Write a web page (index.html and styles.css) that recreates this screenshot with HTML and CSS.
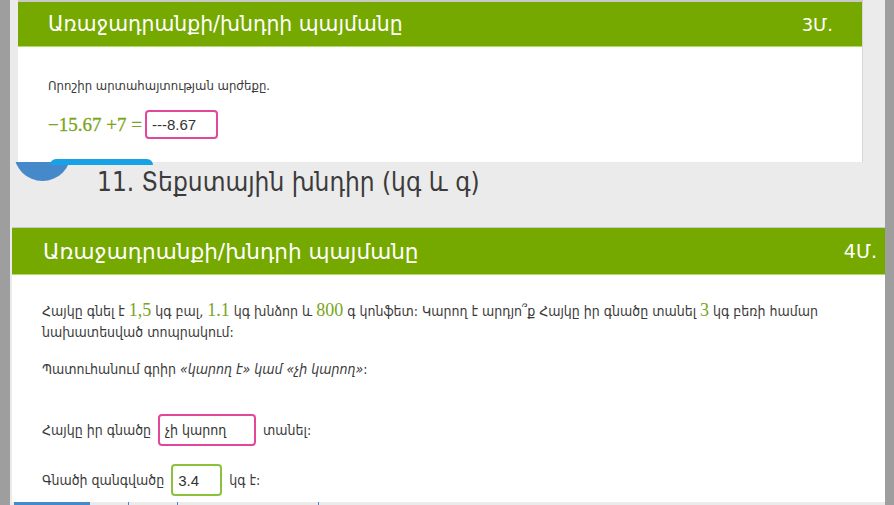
FILE: index.html
```html
<!DOCTYPE html>
<html lang="hy">
<head>
<meta charset="utf-8">
<link rel="stylesheet" href="styles.css">
</head>
<body>
<div class="side side-left"></div>
<main class="main">
  <section class="card card-one">
    <header class="card-head head-one">
      <span class="head-title">Առաջադրանքի/խնդրի պայմանը</span>
      <span class="head-points">3Մ.</span>
    </header>
    <div class="card-body body-one">
      <p class="task-text">Որոշիր արտահայտության արժեքը.</p>
      <div class="math-row">
        <span class="math">−15.67 +7 =</span>
        <span class="answer answer-pink answer-math">---8.67</span>
      </div>
    </div>
  </section>

  <div class="section-title">
    <span class="blue-tab"></span>
    <span class="circle-clip"><span class="blue-circle"></span></span>
    <h2 class="title-text">11. Տեքստային խնդիր (կգ և գ)</h2>
  </div>

  <section class="card card-two">
    <header class="card-head head-two">
      <span class="head-title">Առաջադրանքի/խնդրի պայմանը</span>
      <span class="head-points">4Մ.</span>
    </header>
    <div class="card-body body-two">
      <p class="task-text text-large"><span>Հայկը գնել է</span> <span class="num">1,5</span> <span>կգ բալ,</span> <span class="num">1.1</span> <span>կգ խնձոր և</span> <span class="num">800</span> <span>գ կոնֆետ: Կարող է արդյո՞ք Հայկը իր գնածը տանել</span> <span class="num">3</span> <span>կգ բեռի համար</span> <span>նախատեսված տոպրակում:</span></p>
      <p class="task-text text-large hint">Պատուհանում գրիր <em>«կարող է» կամ «չի կարող»</em>:</p>
      <div class="answer-row row-first">
        <span>Հայկը իր գնածը</span>
        <span class="answer answer-pink answer-wide">չի կարող</span>
        <span>տանել:</span>
      </div>
      <div class="answer-row row-second">
        <span>Գնածի զանգվածը</span>
        <span class="answer answer-green answer-short">3.4</span>
        <span>կգ է:</span>
      </div>
    </div>
  </section>
  <div class="bottom-strip">
    <span class="strip-block"></span>
    <span class="strip-line line-a"></span>
    <span class="strip-line line-b"></span>
    <span class="strip-line line-c"></span>
  </div>
</main>
<div class="side side-right"></div>
</body>
</html>
```

FILE: styles.css
```css
html, body {
  margin: 0;
  padding: 0;
}
body {
  width: 894px;
  height: 505px;
  overflow: hidden;
  display: flex;
  background: #ebebeb;
  font-family: "DejaVu Sans", "Noto Sans", sans-serif;
  color: #3a3a3a;
}
.side {
  flex: none;
  background: #9e9e9e;
}
.side-left { width: 10px; }
.side-right { width: 9px; }
.main {
  flex: none;
  width: 875px;
  display: flex;
  flex-direction: column;
  position: relative;
}
.card {
  background: #fff;
  position: relative;
  z-index: 2;
}
.card-one {
  margin-left: 8px;
  width: 844px;
  border-top: 2px solid #c9c9c9;
  border-right: 1px solid #d6d6d6;
}
.card-head {
  display: flex;
  align-items: center;
  justify-content: space-between;
  background: #75a900;
  color: #fff;
  border-bottom: 1px solid #b5d86a;
}
.head-one {
  height: 44px;
  padding: 0 29px 0 30px;
  font-size: 20.4px;
}
.head-two {
  height: 46px;
  padding: 0 8px 0 31px;
  font-size: 21.6px;
  border-top: 1px solid #c9c9c9;
}
.head-points {
  font-size: 0.88em;
}
.body-one {
  height: 115px;
  padding: 28px 30px 0 30px;
  box-sizing: border-box;
}
.task-text {
  margin: 0;
  font-family: "DejaVu Sans Condensed", "DejaVu Sans", sans-serif;
  font-stretch: condensed;
  font-size: 13px;
  line-height: 21px;
}
.text-large {
  font-size: 14px;
}
.math-row {
  display: flex;
  align-items: center;
  margin-top: 14px;
  gap: 3px;
}
.math {
  font-family: "Liberation Serif", "DejaVu Serif", serif;
  font-size: 19px;
  color: #78a520;
  -webkit-text-stroke: 0.3px #78a520;
}
.answer {
  display: inline-flex;
  align-items: center;
  box-sizing: border-box;
  border-radius: 4px;
  padding: 0 5px;
  font-family: "DejaVu Sans Condensed", "DejaVu Sans", sans-serif;
  font-stretch: condensed;
  font-size: 14px;
  color: #333;
  background: #fff;
}
.answer-pink { border: 2px solid #e3479c; }
.answer-green { border: 2px solid #8cc23b; }
.answer-math {
  width: 73px;
  height: 29px;
  font-family: "Liberation Sans", sans-serif;
  font-size: 15px;
}
.section-title {
  height: 65px;
  display: flex;
  align-items: flex-start;
  position: relative;
}
.blue-tab {
  position: absolute;
  left: 40px;
  top: -3px;
  width: 103px;
  height: 6px;
  background: #17a2e6;
  border-radius: 6px 6px 0 0;
  z-index: 3;
}
.circle-clip {
  position: absolute;
  left: 0;
  top: 0;
  width: 80px;
  height: 30px;
  overflow: hidden;
  z-index: 1;
}
.blue-circle {
  position: absolute;
  left: 4px;
  top: -38px;
  width: 57px;
  height: 57px;
  border-radius: 50%;
  background: #4589cb;
}
.title-text {
  margin: 2px 0 0 87px;
  font-family: "DejaVu Sans Condensed", "DejaVu Sans", sans-serif;
  font-stretch: condensed;
  font-weight: normal;
  font-size: 26px;
  line-height: 36px;
  color: #3b3b3b;
  position: relative;
  z-index: 3;
}
.card-two {
  margin-left: 2px;
  width: 873px;
}
.body-two {
  height: 227px;
  padding: 26px 30px 0 30px;
  box-sizing: border-box;
}
.hint {
  margin-top: 16px;
}
.hint em {
  font-style: italic;
}
.num {
  font-family: "Liberation Serif", "DejaVu Serif", serif;
  font-size: 18px;
  line-height: 1;
  color: #78a520;
}
.answer-row {
  display: flex;
  align-items: center;
  gap: 7px;
  font-family: "DejaVu Sans Condensed", "DejaVu Sans", sans-serif;
  font-stretch: condensed;
  font-size: 14px;
}
.row-first { margin-top: 34px; }
.row-second { margin-top: 18px; }
.answer-wide {
  width: 98px;
  height: 32px;
}
.answer-short {
  width: 51px;
  height: 32px;
  font-family: "Liberation Sans", sans-serif;
  font-size: 15px;
}
.bottom-strip {
  flex: 1;
  position: relative;
}
.strip-block {
  position: absolute;
  left: 4px;
  top: 0;
  width: 76px;
  height: 6px;
  background: #4589cb;
}
.strip-line {
  position: absolute;
  top: 0;
  width: 1px;
  height: 6px;
  background: #4589cb;
}
.line-a { left: 118px; }
.line-b { left: 167px; }
.line-c { left: 308px; }
```
